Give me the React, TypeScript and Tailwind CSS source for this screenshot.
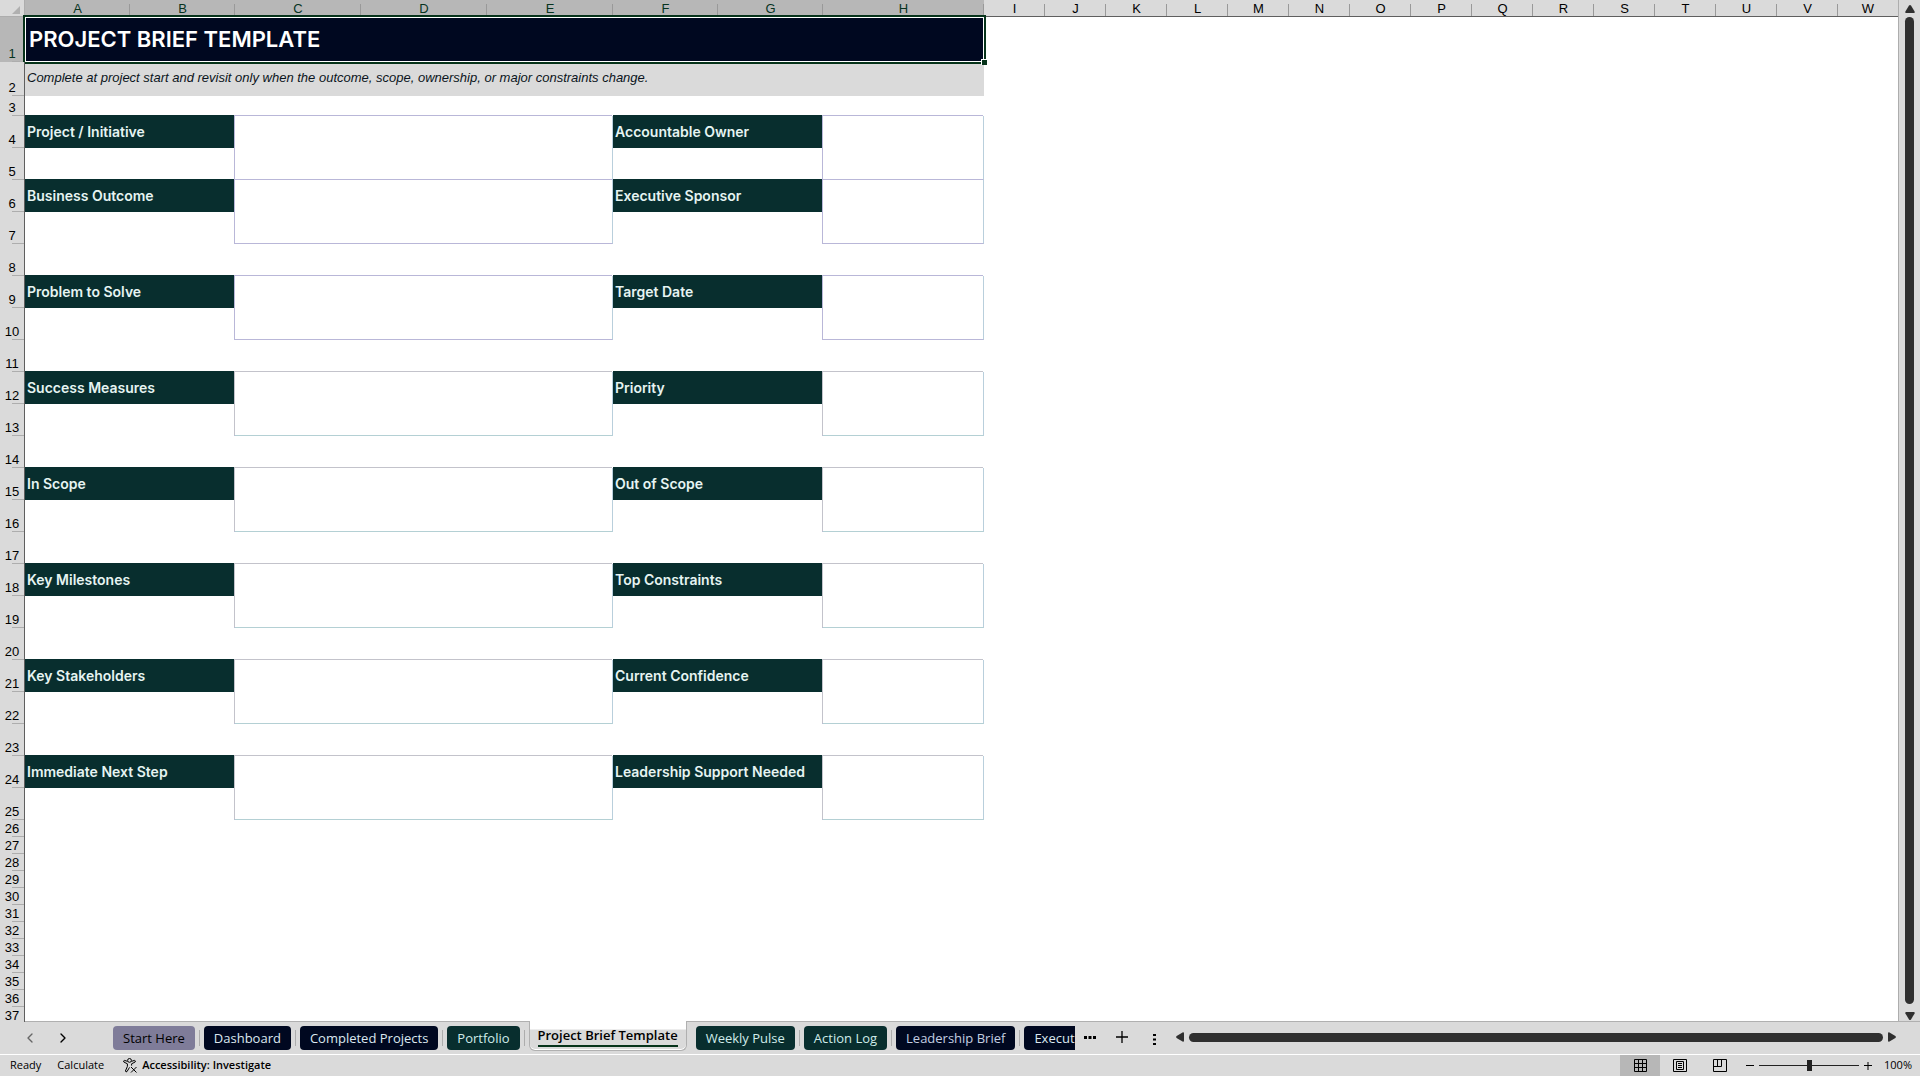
import React from 'react';
import { ChevronLeft, ChevronRight } from 'lucide-react';

const columns = [
  { name: 'A', width: 105 },
  { name: 'B', width: 105 },
  { name: 'C', width: 126 },
  { name: 'D', width: 126 },
  { name: 'E', width: 126 },
  { name: 'F', width: 105 },
  { name: 'G', width: 105 },
  { name: 'H', width: 161 },
  ...'IJKLMNOPQRSTUV'.split('').map((name) => ({ name, width: 61 })),
  // last column takes whatever is left of the window
  { name: 'W', width: undefined },
];

const sections = [
  { row: 4, left: 'Project / Initiative', right: 'Accountable Owner' },
  { row: 6, left: 'Business Outcome', right: 'Executive Sponsor' },
  { row: 9, left: 'Problem to Solve', right: 'Target Date' },
  { row: 12, left: 'Success Measures', right: 'Priority' },
  { row: 15, left: 'In Scope', right: 'Out of Scope' },
  { row: 18, left: 'Key Milestones', right: 'Top Constraints' },
  { row: 21, left: 'Key Stakeholders', right: 'Current Confidence' },
  { row: 24, left: 'Immediate Next Step', right: 'Leadership Support Needed' },
];

const tabs = [
  { name: 'Start Here', color: 'bg-[#7f7c99] text-black' },
  { name: 'Dashboard', color: 'bg-[#000820] text-[#dce8f0]' },
  { name: 'Completed Projects', color: 'bg-[#000820] text-[#dce8f0]' },
  { name: 'Portfolio', color: 'bg-[#082e2e] text-[#d0ecea]' },
  { name: 'Project Brief Template', active: true },
  { name: 'Weekly Pulse', color: 'bg-[#082e2e] text-[#d0ecea]' },
  { name: 'Action Log', color: 'bg-[#082e2e] text-[#d0ecea]' },
  { name: 'Leadership Brief', color: 'bg-[#000820] text-[#c4cfe2]' },
  { name: 'Executive Summary', color: 'bg-[#000820] text-[#dce8f0]' },
];

function RowHeader({ n, selected }: { n: number; selected?: boolean }) {
  return (
    <th
      scope="row"
      className={`relative border-r border-[#5f5f5f] p-0 text-center align-bottom text-[13px] leading-4 font-normal after:absolute after:right-0 after:bottom-0 after:h-px after:w-3 after:bg-[#adadad] ${
        selected ? 'bg-[#b7b7b7] text-[#06331f]' : 'bg-[#dadada] text-black'
      }`}
    >
      {n}
    </th>
  );
}

function LabelCell({ text }: { text: string }) {
  return (
    <td
      colSpan={2}
      className="bg-[#082e2e] p-0 pl-0.5 text-left align-middle font-[Inter] text-[14px] leading-4 font-semibold text-[#e6f4f2] shadow-[0_-1px_0_#082e2e]"
    >
      {text}
    </td>
  );
}

function BoxCell({ colSpan, late }: { colSpan: number; late: boolean }) {
  return (
    <td
      colSpan={colSpan}
      rowSpan={2}
      className={`border-r border-b p-0 ${
        late
          ? 'border-r-[#b9cfdc] border-b-[#b4d0d4] shadow-[-1px_-1px_0_#c3c3cb,-1px_0_0_#bcbcd4]'
          : 'border-r-[#b9cfdc] border-b-[#b9b7d8] shadow-[-1px_-1px_0_#b9b7d8,-1px_0_0_#b9b7d8]'
      }`}
    />
  );
}

function Sheet() {
  const rows = Array.from({ length: 34 }, (_, i) => i + 4);

  return (
    <table className="w-full table-fixed border-separate border-spacing-0 font-['Liberation_Sans',sans-serif]">
      <colgroup>
        <col className="w-[25px]" />
        {columns.map((c) => (
          <col key={c.name} style={{ width: c.width }} />
        ))}
      </colgroup>
      <thead>
        <tr className="h-[17px]">
          <th className="border-r border-b border-[#adadad] bg-[#dadada] p-0">
            <svg viewBox="0 0 8 8" className="mt-1 ml-auto mr-1 block h-2 w-2 fill-[#b0b0b0]">
              <path d="M8 0v8H0z" />
            </svg>
          </th>
          {columns.map((c, i) => (
            <th
              key={c.name}
              scope="col"
              className={`relative border-b border-[#5f5f5f] p-0 pt-0.5 text-center text-[13px] leading-3.5 font-normal after:absolute after:right-0 after:bottom-0 after:h-3 after:w-px after:bg-[#999] last:after:hidden ${
                i < 8 ? 'bg-[#b7b7b7] text-[#06331f]' : 'bg-[#dadada] text-black'
              }`}
            >
              {c.name}
            </th>
          ))}
        </tr>
      </thead>
      <tbody>
        <tr className="h-[45px]">
          <RowHeader n={1} selected />
          <td
            colSpan={8}
            className="relative border border-white bg-[#000820] p-0 pb-0.5 pl-[3px] text-left align-middle font-[Inter] text-[22px] leading-7 font-semibold text-white outline-2 outline-[#06331a]"
          >
            PROJECT BRIEF TEMPLATE
            {/* fill handle */}
            <span className="absolute -right-1 -bottom-1 h-1.5 w-1.5 border-t border-l border-white bg-[#06331a]" />
          </td>
        </tr>
        <tr className="h-[34px]">
          <RowHeader n={2} />
          <td
            colSpan={8}
            className="bg-[#dadada] p-0 pb-0.5 pl-0.5 text-left align-middle text-[13px] leading-4 text-[#0a1420] italic"
          >
            Complete at project start and revisit only when the outcome, scope, ownership, or major constraints change.
          </td>
        </tr>
        <tr className="h-5">
          <RowHeader n={3} />
        </tr>
        {rows.map((n) => {
          const section = sections.find((s) => s.row === n);
          const second = sections.some((s) => s.row === n - 1);
          return (
            <tr key={n} className={n < 26 ? 'h-8' : 'h-[17px]'}>
              <RowHeader n={n} />
              {section && (
                <>
                  <LabelCell text={section.left} />
                  <BoxCell colSpan={3} late={n > 9} />
                  <LabelCell text={section.right} />
                  <BoxCell colSpan={1} late={n > 9} />
                </>
              )}
              {second && (
                <>
                  <td colSpan={2} />
                  <td colSpan={2} />
                </>
              )}
            </tr>
          );
        })}
      </tbody>
    </table>
  );
}

function VerticalScrollbar() {
  return (
    <div className="flex w-[21px] shrink-0 flex-col items-center gap-1 bg-[#dadada] pt-[5px] pb-0.5">
      <button aria-label="Scroll up">
        <svg viewBox="0 0 10 8" className="block h-2 w-[10px] fill-[#2f2f2f]">
          <path d="M4 .6Q5-.4 6 .6L9.6 6.5Q10 8 8.8 8H1.2Q0 8 .4 6.5z" />
        </svg>
      </button>
      <div className="w-[9px] flex-1 rounded-full bg-[#2f2f2f]" />
      <button aria-label="Scroll down" className="mt-1">
        <svg viewBox="0 0 10 8" className="block h-2 w-[10px] rotate-180 fill-[#2f2f2f]">
          <path d="M4 .6Q5-.4 6 .6L9.6 6.5Q10 8 8.8 8H1.2Q0 8 .4 6.5z" />
        </svg>
      </button>
    </div>
  );
}

function TabBar() {
  return (
    <div className="flex h-8 shrink-0 items-stretch bg-[#dadada] shadow-[0_-1px_0_#b0b0b0]">
      <div className="flex w-[113px] shrink-0 items-center gap-[17px] pl-[22px]">
        <button aria-label="Previous sheet">
          <ChevronLeft className="h-4 w-4 text-[#666]" strokeWidth={2} />
        </button>
        <button aria-label="Next sheet">
          <ChevronRight className="h-4 w-4 text-black" strokeWidth={2} />
        </button>
      </div>
      <nav aria-label="Sheets" className="flex w-[962px] shrink-0 items-start overflow-x-clip font-['Open_Sans',sans-serif]">
        {tabs.map((t) =>
          t.active ? (
            <button
              key={t.name}
              className="-mt-px mr-[9px] h-[30px] shrink-0 rounded-b-md border-x border-b border-[#b0b0b0] bg-[linear-gradient(white_8px,#dadada_9px)] px-2 text-[13px] leading-5 font-semibold text-black shadow-[inset_0_-1px_0_white]"
            >
              <span className="block border-b-2 border-[#06331a]">{t.name}</span>
            </button>
          ) : (
            <button
              key={t.name}
              className={`relative mt-1 mr-[9px] h-6 shrink-0 rounded px-2.5 text-[13px] leading-6 after:absolute after:top-1 after:-right-[5px] after:h-4 after:w-px after:bg-[#adadad] ${t.color}`}
            >
              {t.name}
            </button>
          ),
        )}
      </nav>
      <div className="flex flex-1 items-center pr-6 pb-0.5">
        <button aria-label="More sheets" className="ml-[9px]">
          <svg viewBox="0 0 12 3" className="block h-[3px] w-3 fill-black">
            <path d="M0 0h3v3H0zM4.5 0h3v3h-3zM9 0h3v3H9z" />
          </svg>
        </button>
        <button aria-label="New sheet" className="ml-5">
          <svg viewBox="0 0 12 12" className="block h-3 w-3 stroke-black">
            <path d="M6 0v12M0 6h12" strokeWidth="1.3" />
          </svg>
        </button>
        <svg viewBox="0 0 3 11" className="mt-1 ml-[25px] block h-[11px] w-[3px] fill-black">
          <path d="M0 0h3v2H0zM0 4.5h3v2H0zM0 9h3v2H0z" />
        </svg>
        <button aria-label="Scroll left" className="ml-5">
          <svg viewBox="0 0 8 10" className="block h-[10px] w-2 fill-[#2f2f2f]">
            <path d="M.6 4Q-.4 5 .6 6L6.5 9.6Q8 10 8 8.8V1.2Q8 0 6.5 .4z" />
          </svg>
        </button>
        <div className="mx-[5px] h-[9px] flex-1 rounded-full bg-[#2f2f2f]" />
        <button aria-label="Scroll right">
          <svg viewBox="0 0 8 10" className="block h-[10px] w-2 rotate-180 fill-[#2f2f2f]">
            <path d="M.6 4Q-.4 5 .6 6L6.5 9.6Q8 10 8 8.8V1.2Q8 0 6.5 .4z" />
          </svg>
        </button>
      </div>
    </div>
  );
}

function StatusBar() {
  return (
    <footer className="flex h-[22px] shrink-0 items-center border-t border-white bg-[#dadada] pr-2 pl-[10px] font-['Open_Sans',sans-serif] text-[11px] text-black">
      <span>Ready</span>
      <span className="ml-4">Calculate</span>
      <button className="ml-[19px] flex items-center gap-1 font-semibold">
        <svg viewBox="0 0 15 15" className="h-[15px] w-[15px] fill-none stroke-black">
          <circle cx="6.5" cy="2.4" r="1.9" />
          <path d="M4.6 3.4L1.6 2.4Q.2 2.6.8 4L4.4 5.8v2.6l-2 4.6q.4 1.4 1.6.6l2.500-4.2M8.4 3.4l3-1q1.4.2.8 1.6L8.6 5.8v1.8M8 9l5.500 5.500M13.500 9L8 14.500" />
        </svg>
        Accessibility: Investigate
      </button>
      <div className="ml-auto flex h-full items-center">
        <button aria-label="Normal view" className="flex h-full w-10 items-center justify-center bg-[#b7b7b7]">
          <svg viewBox="0 0 13 13" className="h-[13px] w-[13px] fill-none stroke-black">
            <path d="M.5.5h12v12H.5zM4.5.5v12M8.5.5v12M.5 4.5h12M.5 8.5h12" />
          </svg>
        </button>
        <button aria-label="Page layout view" className="flex h-full w-10 items-center justify-center">
          <svg viewBox="0 0 14 13" className="h-[13px] w-[14px] fill-none stroke-black">
            <path d="M.5.5h13v12H.5zM3.5 2.5h7v8h-7zM5 4.5h4M5 6.5h4M5 8.5h4" />
          </svg>
        </button>
        <button aria-label="Page break preview" className="flex h-full w-10 items-center justify-center">
          <svg viewBox="0 0 14 13" className="h-[13px] w-[14px] fill-none stroke-black">
            <path d="M.5.5h13v12H.5zM4.5.5v7M8.5.5v7M.5 7.5h8" />
          </svg>
        </button>
        <button aria-label="Zoom out" className="ml-[6px]">
          <svg viewBox="0 0 8 8" className="h-2 w-2 stroke-black">
            <path d="M0 3.5h8" />
          </svg>
        </button>
        <input
          type="range"
          aria-label="Zoom"
          min={10}
          max={190}
          defaultValue={100}
          className="mx-[5px] h-3 w-[100px] appearance-none bg-[linear-gradient(#222,#222)] bg-[length:100%_1px] bg-center bg-no-repeat [&::-webkit-slider-thumb]:h-[11px] [&::-webkit-slider-thumb]:w-[5px] [&::-webkit-slider-thumb]:appearance-none [&::-webkit-slider-thumb]:bg-[#222]"
        />
        <button aria-label="Zoom in">
          <svg viewBox="0 0 8 8" className="h-2 w-2 stroke-black">
            <path d="M0 3.5h8M4 0v8" />
          </svg>
        </button>
        <span className="ml-3">100%</span>
      </div>
    </footer>
  );
}

export default function App() {
  return (
    <div className="flex h-screen flex-col overflow-hidden bg-white">
      <main className="flex min-h-0 flex-1">
        <div className="min-w-0 flex-1 overflow-hidden border-r border-[#adadad]">
          <Sheet />
        </div>
        <VerticalScrollbar />
      </main>
      <TabBar />
      <StatusBar />
    </div>
  );
}
